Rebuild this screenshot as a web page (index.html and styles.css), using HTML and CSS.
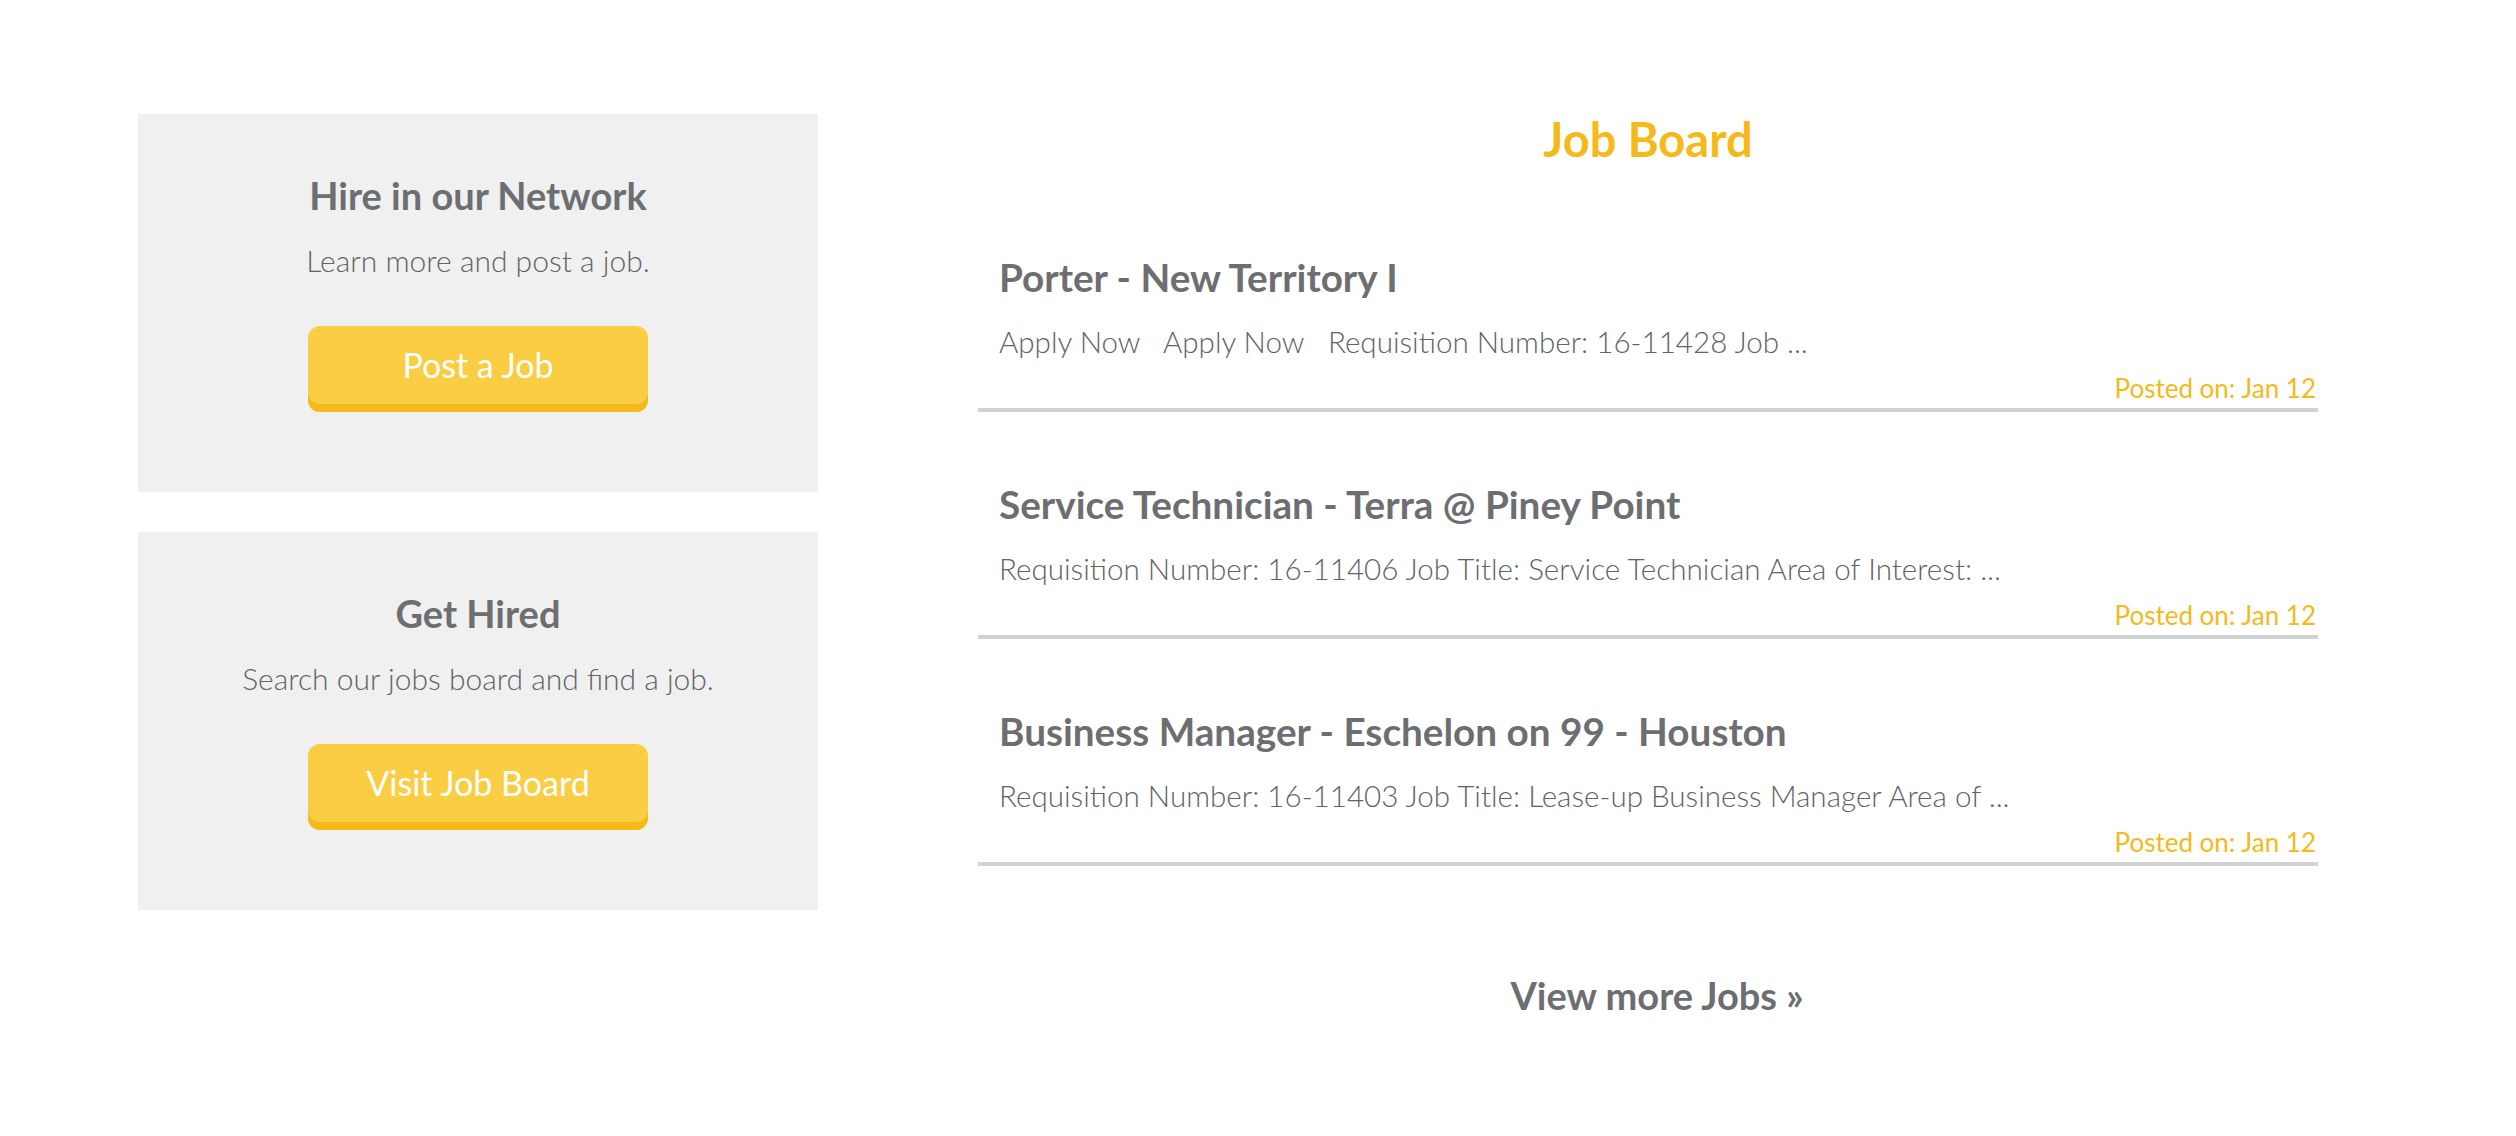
FILE: index.html
```html
<!DOCTYPE html>
<html lang="en">
<head>
<meta charset="utf-8">
<title>Job Board</title>
<link rel="stylesheet" href="styles.css">
</head>
<body>
<div class="page">
  <aside class="sidebar">
    <section class="card">
      <h3 class="card-title">Hire in our Network</h3>
      <p class="card-text">Learn more and post a job.</p>
      <a class="btn" href="#">Post a Job</a>
    </section>
    <section class="card">
      <h3 class="card-title">Get Hired</h3>
      <p class="card-text">Search our jobs board and find a job.</p>
      <a class="btn" href="#">Visit Job Board</a>
    </section>
  </aside>
  <main class="board">
    <h2 class="board-title">Job Board</h2>
    <div class="jobs">
      <article class="job">
        <h4 class="job-title">Porter - New Territory I</h4>
        <p class="job-desc">Apply Now&nbsp;&nbsp; Apply Now&nbsp;&nbsp; Requisition Number: 16-11428 Job ...</p>
        <p class="job-date">Posted on: Jan 12</p>
      </article>
      <article class="job">
        <h4 class="job-title">Service Technician - Terra @ Piney Point</h4>
        <p class="job-desc">Requisition Number: 16-11406 Job Title: Service Technician Area of Interest: ...</p>
        <p class="job-date">Posted on: Jan 12</p>
      </article>
      <article class="job">
        <h4 class="job-title">Business Manager - Eschelon on 99 - Houston</h4>
        <p class="job-desc">Requisition Number: 16-11403 Job Title: Lease-up Business Manager Area of ...</p>
        <p class="job-date">Posted on: Jan 12</p>
      </article>
    </div>
    <a class="more" href="#">View more Jobs »</a>
  </main>
</div>
</body>
</html>
```
FILE: styles.css
```css
* { box-sizing: border-box; }
html, body { margin: 0; padding: 0; background: #ffffff; }
body {
  font-family: Lato, "Open Sans", "Liberation Sans", sans-serif;
  color: #6d6e71;
}
.page {
  display: flex;
  align-items: flex-start;
  gap: 160px;
  padding: 114px 0 0 138px;
}
.sidebar {
  width: 680px;
  display: flex;
  flex-direction: column;
  gap: 40px;
}
.card {
  height: 378px;
  background: #f0f0f0;
  padding-top: 62px;
  display: flex;
  flex-direction: column;
  align-items: center;
  text-align: center;
}
.card-title {
  margin: 0;
  font-size: 38px;
  line-height: 38px;
  font-weight: 700;
  color: #6d6e71;
}
.card-text {
  margin: 32px 0 0;
  font-size: 30px;
  line-height: 29px;
  font-weight: 300;
  color: #626366;
}
.btn {
  margin-top: 51px;
  width: 340px;
  height: 86px;
  padding-bottom: 8px;
  border-radius: 12px;
  background: #facd42;
  box-shadow: inset 0 -8px 0 #f5b91a;
  color: #ffffff;
  text-decoration: none;
  font-size: 34px;
  line-height: 78px;
  font-weight: 400;
}
.board {
  width: 1340px;
}
.board-title {
  margin: 2px 0 0;
  text-align: center;
  font-size: 47px;
  line-height: 47px;
  font-weight: 700;
  color: #f5b91a;
}
.jobs {
  margin-top: 22px;
}
.job {
  padding: 73px 2px 7px 21px;
  border-bottom: 4px solid #d1d2d4;
}
.job-title {
  margin: 0;
  font-size: 38.7px;
  line-height: 38px;
  font-weight: 700;
}
.job-desc {
  margin: 31px 0 0;
  font-size: 29.6px;
  line-height: 29px;
  font-weight: 300;
  color: #626366;
}
.job-date {
  margin: 19px 0 0;
  text-align: right;
  font-size: 26px;
  line-height: 26px;
  font-weight: 400;
  color: #f5b91a;
}
.more {
  display: block;
  margin-top: 110px;
  padding-left: 18px;
  text-align: center;
  font-size: 38px;
  line-height: 38px;
  font-weight: 700;
  color: #6d6e71;
  text-decoration: none;
}
```
